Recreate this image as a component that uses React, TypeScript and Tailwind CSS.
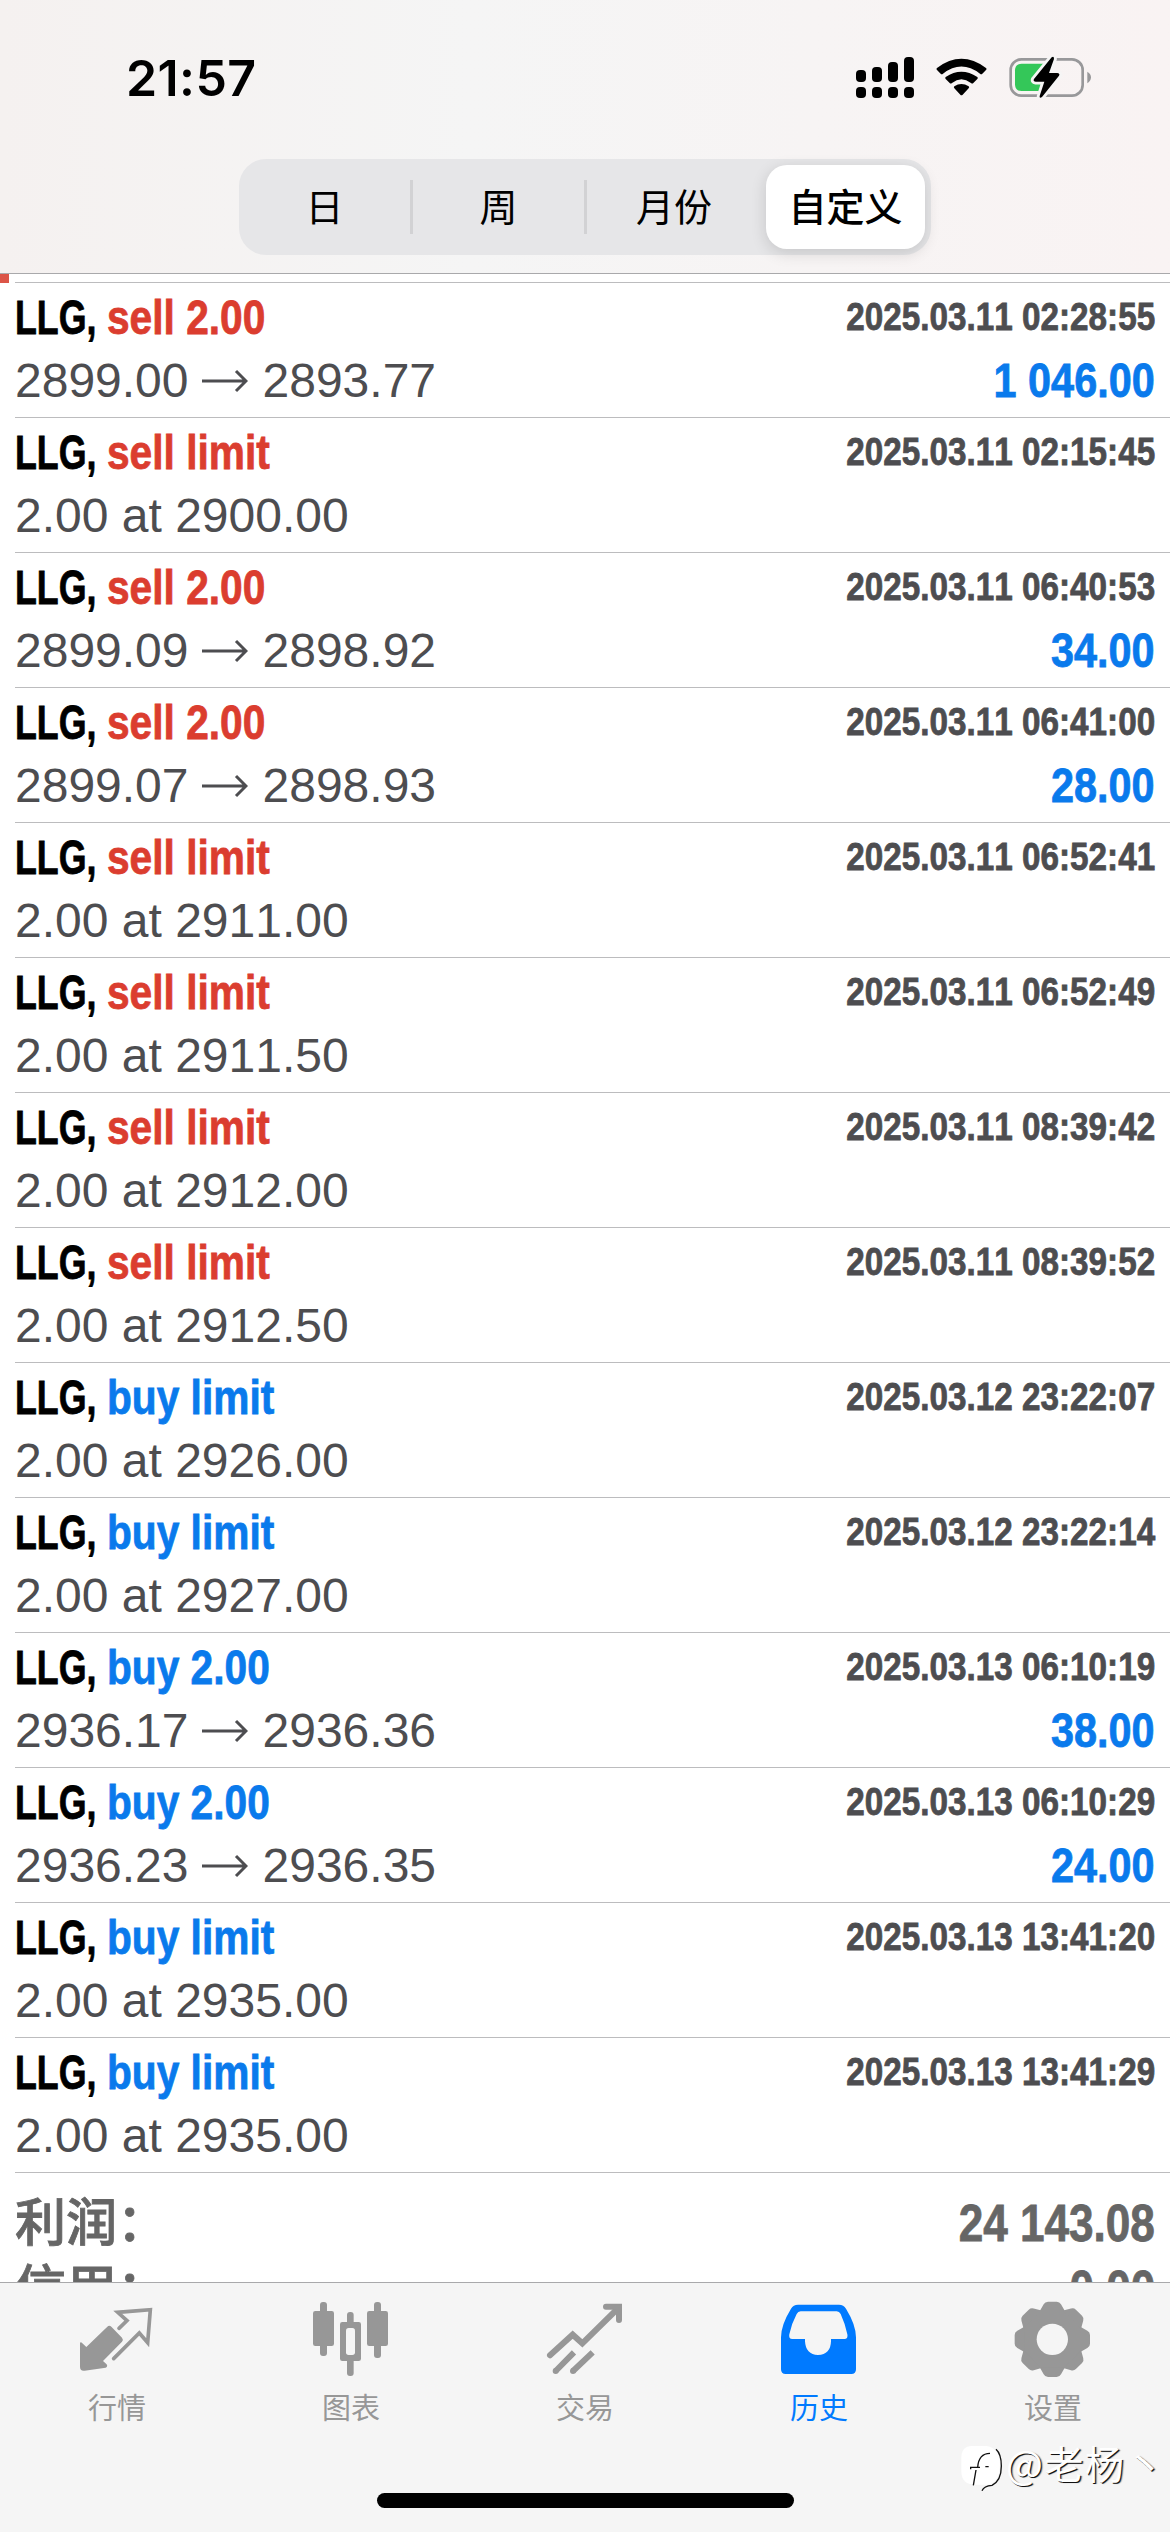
import { ReactNode } from 'react';

import classNames from 'clsx';

interface Deal {
  side: 'buy' | 'sell';
  volume?: string;
  price: string;
  closePrice?: string;
  time: string;
  profit?: string;
}

const deals: Deal[] = [
  {
    side: 'sell',
    volume: '2.00',
    price: '2899.00',
    closePrice: '2893.77',
    time: '2025.03.11 02:28:55',
    profit: '1 046.00',
  },
  { side: 'sell', price: '2900.00', time: '2025.03.11 02:15:45' },
  {
    side: 'sell',
    volume: '2.00',
    price: '2899.09',
    closePrice: '2898.92',
    time: '2025.03.11 06:40:53',
    profit: '34.00',
  },
  {
    side: 'sell',
    volume: '2.00',
    price: '2899.07',
    closePrice: '2898.93',
    time: '2025.03.11 06:41:00',
    profit: '28.00',
  },
  { side: 'sell', price: '2911.00', time: '2025.03.11 06:52:41' },
  { side: 'sell', price: '2911.50', time: '2025.03.11 06:52:49' },
  { side: 'sell', price: '2912.00', time: '2025.03.11 08:39:42' },
  { side: 'sell', price: '2912.50', time: '2025.03.11 08:39:52' },
  { side: 'buy', price: '2926.00', time: '2025.03.12 23:22:07' },
  { side: 'buy', price: '2927.00', time: '2025.03.12 23:22:14' },
  {
    side: 'buy',
    volume: '2.00',
    price: '2936.17',
    closePrice: '2936.36',
    time: '2025.03.13 06:10:19',
    profit: '38.00',
  },
  {
    side: 'buy',
    volume: '2.00',
    price: '2936.23',
    closePrice: '2936.35',
    time: '2025.03.13 06:10:29',
    profit: '24.00',
  },
  { side: 'buy', price: '2935.00', time: '2025.03.13 13:41:20' },
  { side: 'buy', price: '2935.00', time: '2025.03.13 13:41:29' },
];

const SignalIcon = () => (
  <svg width={58} height={43} viewBox="48 48 174 129">
    <rect x={48} y={90} width={30} height={36} rx={12} />
    <rect x={96} y={81} width={30} height={45} rx={12} />
    <rect x={144} y={66} width={30} height={60} rx={12} />
    <rect x={192} y={51} width={30} height={75} rx={12} />
    <rect x={48} y={141} width={30} height={33} rx={12} />
    <rect x={96} y={141} width={30} height={33} rx={12} />
    <rect x={144} y={141} width={30} height={33} rx={12} />
    <rect x={192} y={141} width={30} height={33} rx={12} />
  </svg>
);

const WifiIcon = () => (
  <svg width={51} height={43} viewBox="288 48 153 129">
    <path d="M291 84Q364 29 438 84Q441 87 438 90L427 101Q424 104 420 101Q364 58 309 101Q305 104 302 101L291 90Q288 87 291 84Z" />
    <path d="M317 111Q364 79 412 111Q415 114 412 117L400 129Q397 132 393 129Q364 107 336 129Q332 132 329 129L317 117Q314 114 317 111Z" />
    <path d="M343 139Q364 125 386 139Q389 142 386 145L368 164Q364 168 361 164L343 145Q340 142 343 139Z" />
  </svg>
);

const BatteryIcon = () => (
  <svg width={83} height={43} viewBox="507 48 249 129">
    <rect
      x={512}
      y={58}
      width={216}
      height={109}
      rx={32}
      fill="none"
      stroke="#98989a"
      strokeWidth={8}
    />
    <path d="M742 95Q753 102 753 112Q753 123 742 130Z" fill="#98989a" />
    <path d="M545 71H622V153H545Q525 153 525 133V91Q525 71 545 71Z" fill="#34c759" />
    <path
      d="M635 52L582 117Q578 124 587 125H613L599 168Q598 177 606 171L657 107Q661 100 652 99H627L642 57Q642 46 635 52Z"
      stroke="#f6f5f5"
      strokeWidth={17}
      paintOrder="stroke"
    />
  </svg>
);

const LongArrow = () => (
  <svg
    className="mr-[15px] ml-[13px] shrink-0"
    width={46}
    height={24}
    viewBox="0 0 46 24"
    fill="none"
    stroke="#4d4d50"
    strokeWidth={3}
  >
    <path d="M0 12H44M34 2L44 12L34 22" />
  </svg>
);

const QuotesIcon = () => (
  <svg width={80} height={80} viewBox="21 24 240 240">
    <path
      d="M30 158Q33 155 37 160L49 171L112 110Q118 105 124 110L156 143Q161 149 156 155L99 213L109 222Q115 229 107 233L44 242Q30 244 30 230Z"
      fill="#979797"
    />
    <path
      d="M147 115L171 92L143 67L241 59L233 158L208 129L131 206"
      fill="none"
      stroke="#979797"
      strokeWidth={11}
      strokeLinecap="round"
      strokeLinejoin="miter"
    />
  </svg>
);

const ChartsIcon = () => (
  <svg width={80} height={80} viewBox="933 444 240 240" fill="#979797">
    <rect x={960} y={456} width={21} height={162} rx={9} />
    <rect x={939} y={483} width={63} height={105} rx={7} />
    <rect x={1122} y={456} width={21} height={168} rx={9} />
    <rect x={1101} y={483} width={63} height={105} rx={7} />
    <rect x={1041} y={486} width={20} height={192} rx={9} />
    <rect x={1020} y={516} width={63} height={117} rx={7} />
    <rect x={1038} y={534} width={27} height={81} rx={8} fill="#f5f5f5" />
  </svg>
);

const TradeIcon = () => (
  <svg
    width={80}
    height={80}
    viewBox="435 444 240 240"
    fill="none"
    stroke="#979797"
    strokeWidth={18}
  >
    <path d="M450 616L518 554L547 580L655 474" strokeLinecap="round" />
    <path d="M618 470H657V510" strokeLinecap="round" />
    <path d="M467 663L522 607M519 663L578 607" />
    <g fill="#979797" stroke="none">
      <circle cx={467} cy={663} r={9} />
      <circle cx={519} cy={663} r={9} />
    </g>
  </svg>
);

const HistoryIcon = () => (
  <svg width={80} height={80} viewBox="27 444 240 240">
    <path
      fill="#007aff"
      fillRule="evenodd"
      d="M84 464H207Q221 464 228 476Q258 525 258 562V658Q258 672 244 672H47Q33 672 33 658V562Q33 525 63 476Q70 464 84 464ZM92 484Q84 484 80 492Q65 520 58 553Q55 567 67 567H105V574Q107 614 144 615Q182 614 183 574V567H223Q235 567 232 553Q225 520 212 492Q208 484 200 484Z"
    />
  </svg>
);

const SettingsIcon = () => (
  <svg width={80} height={80} viewBox="-118 -124 240 240" fill="#979797">
    <circle r={93} />
    {[0, 45, 90, 135, 180, 225, 270, 315].map((angle) => (
      <path
        key={angle}
        transform={`rotate(${angle})`}
        d="M-38 -84L-26 -105Q-22 -113 -13 -113H13Q22 -113 26 -105L38 -84Z"
      />
    ))}
    <circle r={47} fill="#f5f5f5" />
  </svg>
);

const periods = ['日', '周', '月份'];

const PeriodSwitch = () => (
  <div className="flex h-24 w-[692px] items-center rounded-[27px] bg-[#e6e6e8] text-[38px]">
    {periods.map((period) => (
      <div
        key={period}
        className={classNames(
          'flex h-[54px] w-[174px] items-center justify-center pt-0.5',
          period !== '月份' && 'border-r-[3px] border-[#d2d2d4]',
        )}
      >
        {period}
      </div>
    ))}
    <div className="ml-[5px] flex h-[84px] w-[159px] items-center justify-center rounded-[21px] bg-white pt-0.5 font-medium shadow-[0_4px_16px_rgba(0,0,0,0.14)]">
      自定义
    </div>
  </div>
);

const Header = () => (
  <header className="relative h-[274px] shrink-0 border-b border-[#a9a9ab] bg-linear-to-r from-[#f5f1f0] via-[#f5f5f5] via-40% to-[#f9f3f3]">
    <div className="flex h-[159px] items-start justify-between pt-14 pr-[78px] pl-[126px]">
      <span className="mt-[-8px] font-[Inter] text-[50px] leading-[60px] font-semibold tracking-[0.4px]">
        21:57
      </span>
      <div className="flex gap-[22px]">
        <SignalIcon />
        <WifiIcon />
        <BatteryIcon />
      </div>
    </div>
    <div className="flex justify-center">
      <PeriodSwitch />
    </div>
  </header>
);

const DealRow = ({ deal }: { deal: Deal }) => (
  <div className="ml-[15px] h-[135px] border-b border-[#bcbcbe] pt-0.5 pr-[15px] whitespace-nowrap">
    <div className="flex h-[64px] leading-[64px] font-bold [-webkit-text-stroke:0.8px]">
      <span className="w-[92px] origin-left scale-x-[0.73] text-[49px] text-black">
        LLG,
      </span>
      <span
        className={classNames(
          'origin-left scale-x-[0.83] text-[49px]',
          deal.side === 'sell' ? 'text-[#db3d2f]' : 'text-[#0a7aec]',
        )}
      >
        {deal.side} {deal.volume ?? 'limit'}
      </span>
      <span className="ml-auto origin-right scale-x-[0.853] text-[39px] text-[#4d4d50]">
        {deal.time}
      </span>
    </div>
    <div className="flex h-[64px] items-center text-[48px] leading-[64px] text-[#4d4d50]">
      {deal.closePrice ? (
        <>
          <span>{deal.price}</span>
          <LongArrow />
          <span>{deal.closePrice}</span>
        </>
      ) : (
        <span>2.00 at {deal.price}</span>
      )}
      {deal.profit && (
        <span className="-mt-0.5 ml-auto origin-right scale-x-[0.845] text-[49px] font-bold text-[#0a7aec] [-webkit-text-stroke:0.8px]">
          {deal.profit}
        </span>
      )}
    </div>
  </div>
);

const TotalRow = ({ label, value }: { label: string; value: string }) => (
  <div className="flex h-[66px] shrink-0 items-center justify-between px-[15px] font-bold text-[#666] [-webkit-text-stroke:0.8px]">
    <span className="text-[51px] leading-[66px] font-medium">{label}</span>
    <span className="origin-right scale-x-[0.865] text-[51px] leading-[66px]">
      {value}
    </span>
  </div>
);

interface TabProps {
  icon: ReactNode;
  label: string;
  active?: boolean;
}

const Tab = ({ icon, label, active }: TabProps) => (
  <div
    className={classNames(
      'flex flex-1 flex-col items-center text-[29px] leading-[40px]',
      active ? 'text-[#007aff]' : 'text-[#979797]',
    )}
  >
    {icon}
    <span className="mt-[11px]">{label}</span>
  </div>
);

const Watermark = () => (
  <div className="absolute top-[159px] right-0 flex h-[50px] w-[210px] items-center font-['Noto_Sans_CJK_SC',sans-serif] text-[39px] text-white">
    <svg className="shrink-0" width={45} height={50} viewBox="0 0 135 150">
      <path
        d="M36 12H80Q120 20 120 66Q120 122 84 128H45Q4 128 4 88V48Q4 12 36 12Z"
        fill="#fff"
      />
      <path
        d="M90 34Q56 34 53 76M32 82V76H60M48 84L40 130M76 74H86M108 22Q124 36 124 72Q124 116 96 130Q72 132 66 146"
        fill="none"
        stroke="#111"
        strokeWidth={4}
      />
    </svg>
    <span className="-mt-[10px] ml-px tracking-[1.5px] whitespace-nowrap leading-[50px] [text-shadow:1px_1px_0_#111,2px_1px_1px_rgba(0,0,0,0.4)]">
      @老杨丶
    </span>
  </div>
);

const TabBar = () => (
  <nav className="relative h-[250px] shrink-0 border-t border-[#a9a9ab] bg-[#f5f5f5]">
    <div className="flex pt-[15px]">
      <Tab icon={<QuotesIcon />} label="行情" />
      <Tab icon={<ChartsIcon />} label="图表" />
      <Tab icon={<TradeIcon />} label="交易" />
      <Tab icon={<HistoryIcon />} label="历史" active />
      <Tab icon={<SettingsIcon />} label="设置" />
    </div>
    <div className="mx-auto mt-[64px] h-[15px] w-[417px] rounded-full bg-black" />
    <Watermark />
  </nav>
);

export default function App() {
  return (
    <div className="flex h-[2532px] w-[1170px] flex-col overflow-hidden bg-white font-['Liberation_Sans','Noto_Sans_CJK_SC',sans-serif] text-black [font-kerning:none]">
      <Header />
      <main className="min-h-0 flex-1 overflow-hidden">
        <div className="flex h-[9px]">
          <div className="w-[9px] bg-[#dc5548]" />
          <div className="ml-[6px] flex-1 border-b border-[#bcbcbe]" />
        </div>
        {deals.map((deal) => (
          <DealRow key={deal.time} deal={deal} />
        ))}
        <div className="pt-[18px]">
          <TotalRow label="利润：" value="24 143.08" />
          <TotalRow label="信用：" value="0.00" />
        </div>
      </main>
      <TabBar />
    </div>
  );
}
